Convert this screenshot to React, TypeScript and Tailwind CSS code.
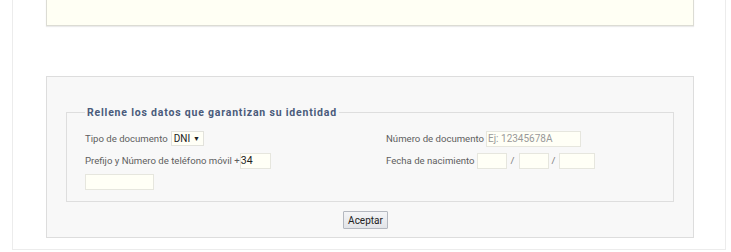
export default function App() {
  return (
    <div className="h-[252px] w-[731px] overflow-hidden bg-white font-['Roboto',sans-serif]">
      <div className="ml-[12px] mt-[-10px] h-[260px] w-[714px] border border-[#ececec] bg-white">
        <div className="ml-[33px] mt-0 h-[35px] w-[648px] border border-[#dcdcd4] bg-[#fffff4] shadow-[0_1px_1px_rgba(0,0,0,0.08)]" />

        <div className="ml-[33px] mt-[50px] h-[162px] w-[648px] border border-[#dddddd] bg-[#f8f8f8]">
          <fieldset className="mx-[19px] mt-[28px] h-[97px] border border-[#dedede] px-[18px] pb-0 pt-0">
            <legend className="px-[2px] text-[10.5px] font-bold tracking-[0.8px] text-[#4a5b7b]">
              Rellene los datos que garantizan su identidad
            </legend>
            <div className="grid grid-cols-[301px_1fr] text-[9.6px] text-[#5e5e5e]">
              <div className="flex flex-col gap-[6px] pt-[10px]">
                <div className="flex h-[16px] items-center">
                  <span>Tipo de documento</span>
                  <span className="ml-[3px] flex h-[15px] w-[33px] items-center border border-[#e2e2dc] bg-[#fffff6] pl-[2px] text-[10px] text-[#222]">
                    DNI <span className="ml-[3px] text-[7px]">▼</span>
                  </span>
                </div>
                <div className="flex h-[16px] items-center">
                  <span>Prefijo y Número de teléfono móvil +</span>
                  <span className="flex h-[16px] w-[31px] items-center border border-[#e6e6de] bg-[#fffff6] text-[10.5px] text-[#222]">
                    34
                  </span>
                </div>
                <div className="-mt-[1px] h-[16px] w-[69px] border border-[#e6e6de] bg-[#fffff6]" />
              </div>
              <div className="flex flex-col gap-[6px] pt-[10px]">
                <div className="flex h-[16px] items-center">
                  <span>Número de documento</span>
                  <span className="ml-[2px] flex h-[16px] w-[95px] items-center border border-[#e6e6de] bg-[#fffff6] pl-[1px] text-[10px] text-[#999]">
                    Ej: 12345678A
                  </span>
                </div>
                <div className="flex h-[16px] items-center">
                  <span>Fecha de nacimiento</span>
                  <span className="ml-[2px] h-[16px] w-[30px] border border-[#e6e6de] bg-[#fffff6]" />
                  <span className="mx-[3px] px-[1px] text-[#777]">/</span>
                  <span className="h-[16px] w-[30px] border border-[#e6e6de] bg-[#fffff6]" />
                  <span className="mx-[3px] text-[#777]">/</span>
                  <span className="h-[16px] w-[36px] border border-[#e6e6de] bg-[#fffff6]" />
                </div>
              </div>
            </div>
          </fieldset>
          <div className="mt-[9px] flex justify-center pr-[9px]">
            <button
              type="button"
              className="h-[18px] w-[45px] rounded-[1px] border border-[#b4b8c0] bg-gradient-to-b from-[#f4f5f7] to-[#e2e4e8] text-[10px] text-[#222]"
            >
              Aceptar
            </button>
          </div>
        </div>
      </div>
    </div>
  );
}
